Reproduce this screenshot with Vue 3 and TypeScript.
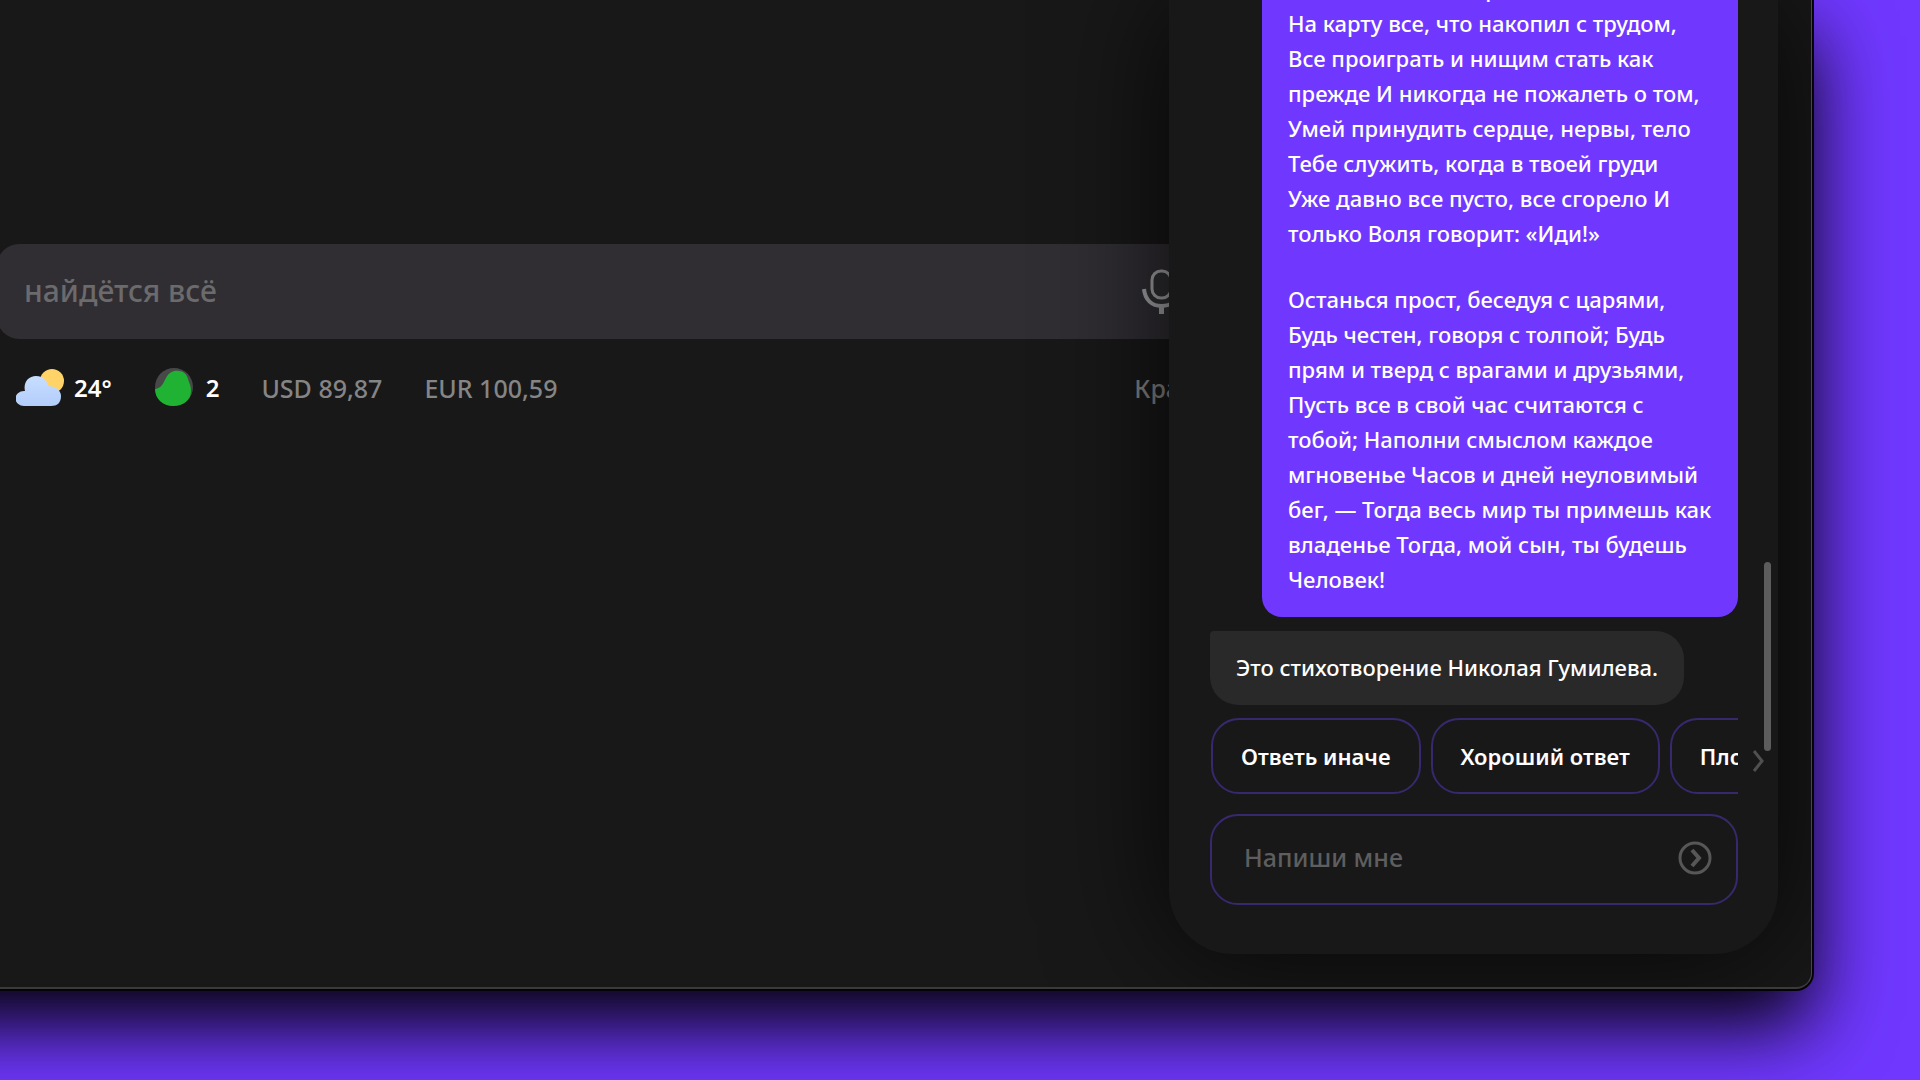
<script setup lang="ts">
import { ref } from 'vue'

const query = ref('')
const message = ref('')

const stanzas: string[][] = [
  [
    'Умей поставить в радостной надежде,',
    'На карту все, что накопил с трудом,',
    'Все проиграть и нищим стать как',
    'прежде И никогда не пожалеть о том,',
    'Умей принудить сердце, нервы, тело',
    'Тебе служить, когда в твоей груди',
    'Уже давно все пусто, все сгорело И',
    'только Воля говорит: «Иди!»',
  ],
  [
    'Останься прост, беседуя с царями,',
    'Будь честен, говоря с толпой; Будь',
    'прям и тверд с врагами и друзьями,',
    'Пусть все в свой час считаются с',
    'тобой; Наполни смыслом каждое',
    'мгновенье Часов и дней неуловимый',
    'бег, — Тогда весь мир ты примешь как',
    'владенье Тогда, мой сын, ты будешь',
    'Человек!',
  ],
]

const replies: string[] = ['Ответь иначе', 'Хороший ответ', 'Плохой ответ']
</script>

<template>
  <div class="page">
    <div class="window">
      <main class="home">
        <form class="search" @submit.prevent>
          <input v-model="query" class="search-input" type="text" placeholder="найдётся всё" aria-label="Поиск" />
          <button class="icon-button" type="button" aria-label="Голосовой поиск">
            <svg width="40" height="48" viewBox="0 0 40 48" fill="none" stroke="#a8a8ab">
              <rect x="11" y="3" width="19" height="27" rx="9" stroke-width="3" />
              <path d="M3 21c1 11 8 17 17.500 17s17-6 18-17" stroke-width="4" />
              <path d="M20.500 37v9" stroke-width="5" />
            </svg>
          </button>
        </form>
        <div class="info">
          <a class="informer weather" href="#">
            <svg width="50" height="40" viewBox="0 0 50 40">
              <defs>
                <linearGradient id="cloud" x1="0" y1="0" x2="0" y2="1">
                  <stop offset="0" stop-color="#c7deff" />
                  <stop offset="1" stop-color="#b3cdfb" />
                </linearGradient>
              </defs>
              <circle cx="36" cy="13" r="12" fill="#ffd368" />
              <path
                d="M8 38a8 7 0 0 1 0-15h1c-2-8 3-15 11-15 7 0 11 4 12 10 7 0 13 4 13 10 0 7-4 10-10 10z"
                fill="url(#cloud)"
              />
            </svg>
            <b>24°</b>
          </a>
          <a class="informer traffic" href="#">
            <svg width="40" height="40" viewBox="0 0 40 40">
              <circle cx="20" cy="19" r="19" fill="#484848" />
              <path
                d="M1 21c7-1 8-6 11-11 3-6 8-8 13-7 4 0 8 3 9 8 1 4 3 6 3 12 0 9-8 15-18 15S1 31 1 21z"
                fill="#20b232"
              />
            </svg>
            <b>2</b>
          </a>
          <a class="informer" href="#">USD 89,87</a>
          <a class="informer" href="#">EUR 100,59</a>
          <a class="informer city" href="#">Краснодар</a>
        </div>
      </main>

      <aside class="chat">
        <div class="user-message">
          <p v-for="(stanza, i) in stanzas" :key="i" class="stanza">{{ stanza.join('\n') }}</p>
        </div>
        <p class="bot-message">Это стихотворение Николая Гумилева.</p>
        <div class="replies">
          <button v-for="reply in replies" :key="reply" class="reply" type="button">{{ reply }}</button>
        </div>
        <form class="composer" @submit.prevent>
          <input v-model="message" class="composer-input" type="text" placeholder="Напиши мне" aria-label="Сообщение" />
          <button class="icon-button" type="submit" aria-label="Отправить">
            <svg width="34" height="34" viewBox="0 0 34 34" fill="none" stroke="#575757">
              <circle cx="17" cy="17" r="15" stroke-width="3" />
              <path d="M14 9l7 8-7 8" stroke-width="4" />
            </svg>
          </button>
        </form>
        <button class="icon-button next" type="button" aria-label="Дальше">
          <svg width="12" height="22" viewBox="0 0 12 22" fill="none" stroke="#505050" stroke-width="3">
            <path d="M2 1l8 10-8 10" />
          </svg>
        </button>
        <div class="scroll-thumb"></div>
      </aside>
    </div>
  </div>
</template>

<style>
body {
  margin: 0;
  background: #7038ff;
}
</style>

<style scoped>
.page {
  box-sizing: border-box;
  display: flex;
  min-height: 100vh;
  padding: 0 108px 91px 0;
  overflow: hidden;
  background: #7038ff;
  font-family: 'Noto Sans', 'Open Sans', sans-serif;
}

.window {
  position: relative;
  flex: 1;
  min-width: 0;
  margin-left: -120px;
  overflow: hidden;
  border-right: 1px solid #484848;
  border-bottom: 2px solid #3b3a39;
  border-bottom-right-radius: 16px;
  background: #181818;
  box-shadow: 0 0 0 2px #05030a, 0 36px 80px #000;
}

.home {
  padding: 244px 0 0 120px;
}

.search {
  box-sizing: border-box;
  display: flex;
  align-items: center;
  height: 95px;
  margin: 0 599px 0 -3px;
  padding: 0 31px 0 27px;
  border-radius: 22px;
  background: #302e33;
}

.search-input,
.composer-input {
  flex: 1;
  min-width: 0;
  padding: 0 0 2px;
  border: 0;
  outline: 0;
  background: none;
  color: #fff;
  font-family: inherit;
  font-weight: 500;
}

.search-input {
  font-size: 30px;
}

.search-input::placeholder {
  color: #6b6a6c;
  opacity: 1;
}

.icon-button {
  display: flex;
  padding: 0;
  border: 0;
  background: none;
}

.info {
  display: flex;
  align-items: center;
  gap: 42px;
  padding: 29px 543px 0 16px;
}

.informer {
  display: flex;
  align-items: center;
  height: 40px;
  color: #858585;
  font-size: 25px;
  font-weight: 500;
  line-height: 36px;
  text-decoration: none;
}

.informer b {
  color: #fff;
  font-size: 24px;
  font-weight: 600;
}

.weather {
  gap: 8px;
}

.traffic {
  gap: 12px;
}

.city {
  margin-left: auto;
}

.chat {
  position: absolute;
  top: 0;
  right: 33px;
  bottom: 33px;
  box-sizing: border-box;
  display: flex;
  flex-direction: column;
  justify-content: flex-end;
  width: 609px;
  padding: 0 40px 49px 41px;
  border-radius: 0 0 64px 64px;
  background: #181818;
  box-shadow: 0 0 120px rgba(0, 0, 0, 0.8);
}

.user-message {
  flex: none;
  align-self: flex-end;
  box-sizing: border-box;
  width: 476px;
  padding: 20px 26px;
  border-radius: 20px;
  background: #7038ff;
  color: #fff;
  font-size: 22px;
  font-weight: 500;
  line-height: 35px;
}

.stanza {
  margin: 0;
  white-space: pre;
}

.stanza + .stanza {
  margin-top: 31px;
}

.bot-message {
  flex: none;
  align-self: flex-start;
  margin: 14px 0 13px;
  padding: 19px 26px 20px;
  border-radius: 4px 28px 28px 28px;
  background: #292929;
  color: #fff;
  font-size: 22px;
  font-weight: 500;
  line-height: 35px;
}

.replies {
  display: flex;
  flex: none;
  gap: 10px;
  margin-bottom: 20px;
  padding-left: 1px;
  overflow: hidden;
}

.reply {
  flex: none;
  height: 76px;
  padding: 0 28px;
  border: 2px solid #38286e;
  border-radius: 28px;
  background: none;
  color: #fff;
  font-family: inherit;
  font-size: 22px;
  font-weight: 600;
}

.composer {
  box-sizing: border-box;
  display: flex;
  flex: none;
  align-items: center;
  height: 91px;
  padding: 0 24px 3px 32px;
  border: 2px solid #38286e;
  border-radius: 28px;
}

.composer-input {
  font-size: 25px;
}

.composer-input::placeholder {
  color: #5e5e5e;
  opacity: 1;
}

.next {
  position: absolute;
  right: 14px;
  bottom: 182px;
}

.scroll-thumb {
  position: absolute;
  right: 7px;
  bottom: 203px;
  width: 7px;
  height: 189px;
  border-radius: 4px;
  background: #5c5c5c;
}
</style>
